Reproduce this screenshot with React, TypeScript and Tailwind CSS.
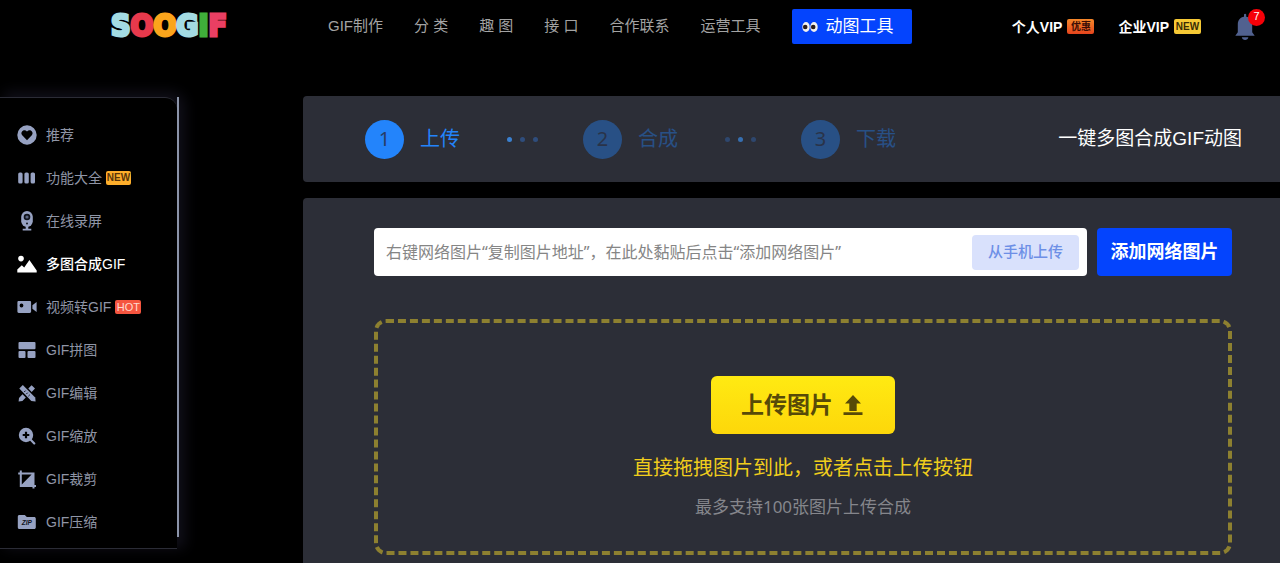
import React from "react";

interface MenuItem {
  label: string;
  icon: React.ReactNode;
  badge?: "NEW" | "HOT";
  active?: boolean;
}

const Icon = ({ children }: { children: React.ReactNode }) => (
  <svg
    className="h-5 w-5 shrink-0"
    viewBox="0 0 20 20"
    fill="currentColor"
    aria-hidden="true"
  >
    {children}
  </svg>
);

const menuItems: MenuItem[] = [
  {
    label: "推荐",
    icon: (
      <Icon>
        <path
          fillRule="evenodd"
          d="M10 .3a9.7 9.7 0 1 1 0 19.4A9.7 9.7 0 0 1 10 .3ZM10 15.2l4.8-4.9c2.6-3-1.7-6.9-4.8-3.9-3.1-3-7.4.9-4.8 3.9L10 15.2Z"
        />
      </Icon>
    ),
  },
  {
    label: "功能大全",
    badge: "NEW",
    icon: (
      <Icon>
        <rect x="1.2" y="4.5" width="4.4" height="11" rx="1.6" />
        <rect x="7.4" y="4.5" width="4.4" height="11" rx="1.6" />
        <rect x="13.6" y="4.5" width="4.4" height="11" rx="1.6" />
      </Icon>
    ),
  },
  {
    label: "在线录屏",
    icon: (
      <Icon>
        <rect x="4.2" y="0" width="11.6" height="16" rx="5.8" />
        <circle cx="10" cy="6" r="3.3" fill="#10131c" />
        <circle cx="10" cy="6" r="1.6" fill="#59637f" />
        <circle cx="10" cy="12.6" r="1" fill="#10131c" />
        <path d="M8.7 15h2.6v2.8h3v1.8H5.7v-1.8h3Z" />
      </Icon>
    ),
  },
  {
    label: "多图合成GIF",
    active: true,
    icon: (
      <Icon>
        <circle cx="4" cy="4.6" r="2.8" />
        <path d="M.3 18.4v-2.8l4.5-4.4 2.4 2.3 5.2-7.6 7.3 10.5v2Z" />
      </Icon>
    ),
  },
  {
    label: "视频转GIF",
    badge: "HOT",
    icon: (
      <Icon>
        <path
          fillRule="evenodd"
          d="M1.8 4h10.9c.9 0 1.4.5 1.4 1.4v9.2c0 .9-.5 1.4-1.4 1.4H1.8C.9 16 .4 15.5.4 14.6V5.4C.4 4.5.9 4 1.8 4Zm2.7 2.6a1.9 1.9 0 1 0 0 3.8 1.9 1.9 0 0 0 0-3.8Z"
        />
        <path d="M15.4 8.3 19.6 5v10l-4.2-3.3Z" />
      </Icon>
    ),
  },
  {
    label: "GIF拼图",
    icon: (
      <Icon>
        <rect x="1.5" y="2" width="17" height="7.2" rx="1" />
        <rect x="1.5" y="11" width="7" height="7" rx="1" />
        <rect x="10.5" y="11" width="8" height="7" rx="1" />
      </Icon>
    ),
  },
  {
    label: "GIF编辑",
    icon: (
      <Icon>
        <path d="m2.3 5.6 3.5-3.5 12.4 12.3.4 4.2-4.3-.5Z" />
        <path d="m14.6 2.2 3.4 3.4-3.3 3.3-3.4-3.4ZM5.5 11.3l3.3 3.3-3.4 3.5-3.8.5.4-3.7Z" />
        <path
          d="m7.2 9 1.4-1.4M9.3 11.1l1.4-1.4M11.4 13.2l1.4-1.4"
          stroke="#10131c"
          strokeWidth="1"
        />
      </Icon>
    ),
  },
  {
    label: "GIF缩放",
    icon: (
      <Icon>
        <path
          fillRule="evenodd"
          d="M9 1.8a7.2 7.2 0 1 1 0 14.4A7.2 7.2 0 0 1 9 1.8ZM7.9 5.7v2.2H5.7v2.2h2.2v2.2h2.2v-2.2h2.2V7.9h-2.2V5.7Z"
        />
        <path
          d="m13.7 13.7 3.6 3.7"
          stroke="currentColor"
          strokeWidth="2.2"
          strokeLinecap="round"
        />
      </Icon>
    ),
  },
  {
    label: "GIF裁剪",
    icon: (
      <Icon>
        <path
          fillRule="evenodd"
          d="M2.8 1.5h2v2h12.7v12.6H19v2h-1.5v1.4h-2v-1.4H2.8V5.5H1.2v-2h1.6ZM4.8 5.5v10l9.8-10Z"
        />
      </Icon>
    ),
  },
  {
    label: "GIF压缩",
    icon: (
      <Icon>
        <path d="M2.5 3h5.3l2 2H17c1.200 0 1.800.6 1.800 1.800v8.400c0 1.200-.6 1.800-1.800 1.800H2.500C1.400 17 .8 16.400.8 15.200V4.800C.8 3.600 1.400 3 2.500 3Z" />
        <text
          x="9.8"
          y="13.4"
          textAnchor="middle"
          fontSize="6.5"
          fontWeight="700"
          fontStyle="italic"
          fill="#10131c"
        >
          ZIP
        </text>
      </Icon>
    ),
  },
];

const navLinks = ["GIF制作", "分 类", "趣 图", "接 口", "合作联系", "运营工具"];

const steps = ["上传", "合成", "下载"];

const logoLetters = [
  { char: "S", color: "text-[#a3dbe3]" },
  { char: "O", color: "text-[#e8394c]" },
  { char: "O", color: "text-[#fba51c]" },
  { char: "G", color: "text-[#a3dbe3]" },
  { char: "I", color: "text-[#3fae3a]" },
  { char: "F", color: "text-[#ea3f63]" },
];

function Header() {
  return (
    <header className="flex h-24 items-start pr-[15px] pl-[111px]">
      <a
        href="#home"
        aria-label="SOOGIF"
        className="mt-2 flex h-9 w-[217px] shrink-0 items-center font-['DejaVu_Sans_Condensed','DejaVu_Sans',sans-serif] text-[30px] leading-9 font-bold"
      >
        {logoLetters.map((letter, i) => (
          <span
            key={i}
            className={`${letter.color} [-webkit-text-stroke:3px_currentColor]`}
          >
            {letter.char}
          </span>
        ))}
      </a>

      <nav className="mt-[9px] flex h-[35px] items-center gap-[31px] text-[15px] whitespace-nowrap text-[#a3a3a3]">
        {navLinks.map((label) => (
          <a key={label} href="#nav">
            {label}
          </a>
        ))}
        <a
          href="#tools"
          className="flex h-[35px] w-[120px] items-center gap-2 rounded-xs bg-[#0444fd] pl-[10px] text-[17px] text-white"
        >
          <svg className="h-3 w-4" viewBox="0 0 16 12" aria-hidden="true">
            <ellipse cx="4" cy="6" rx="3.7" ry="5" fill="#f4f1ee" />
            <ellipse cx="12" cy="6" rx="3.7" ry="5" fill="#f4f1ee" />
            <circle cx="3.2" cy="6" r="2.3" fill="#2b1d1a" />
            <circle cx="11.2" cy="6" r="2.3" fill="#2b1d1a" />
          </svg>
          动图工具
        </a>
      </nav>

      <div className="mt-[9px] ml-auto flex h-[35px] items-center text-sm font-bold whitespace-nowrap text-white">
        <a href="#vip" className="flex items-center gap-[5px]">
          个人VIP
          <span className="flex h-[15px] w-[27px] items-center justify-center rounded-xs bg-linear-to-b from-[#f5872a] to-[#e5431d] text-[10px] leading-none text-[#3b0d05]">
            优惠
          </span>
        </a>
        <a href="#business-vip" className="ml-6 flex items-center gap-[5px]">
          企业VIP
          <span className="flex h-[15px] w-[27px] items-center justify-center rounded-xs bg-[#f6c935] pt-px text-[10px] leading-none text-[#3a2c05]">
            NEW
          </span>
        </a>
        <button type="button" aria-label="7" className="relative ml-[34px] h-7 w-[30px]">
          <svg
            className="h-7 w-5"
            viewBox="0 0 20 28"
            fill="#51618f"
            aria-hidden="true"
          >
            <path d="M9 1.5a1.2 1.2 0 0 1 2.2 0v2.3c3.7.6 6 3.5 6 7.4v8l2.5 3.6H.3l2.5-3.6v-8c0-3.9 2.4-6.800 6.200-7.400Z" />
            <path d="M6.8 24.3h6.6c-.4 1.8-1.6 2.7-3.3 2.7s-2.900-.9-3.300-2.700Z" />
          </svg>
          <span className="absolute -top-1 right-0 flex h-[17px] w-[17px] items-center justify-center rounded-full bg-[#f50008] text-[11px] font-normal">
            7
          </span>
        </button>
      </div>
    </header>
  );
}

function Sidebar() {
  return (
    <aside className="mt-px flex w-[179px] shrink-0 items-start self-start">
      <div className="min-w-0 flex-1 rounded-tr-xl border-y border-[#2b2c36] pt-[15px] pb-[5px] shadow-[6px_-3px_14px_2px_#11101a]">
        <ul>
          {menuItems.map((item) => (
            <li key={item.label}>
              <a
                href="#menu"
                className={`flex h-[43px] items-center pl-[17px] text-sm whitespace-nowrap ${
                  item.active ? "font-medium text-white" : "text-[#8f95a6]"
                }`}
              >
                <span className={item.active ? "text-white" : "text-[#97a2c2]"}>
                  {item.icon}
                </span>
                <span className="ml-[9px]">{item.label}</span>
                {item.badge === "NEW" && (
                  <span className="ml-1 flex h-[14px] w-[25px] items-center justify-center rounded-xs bg-[#fdae2b] pt-px text-[10px] leading-none font-bold text-[#59350a]">
                    NEW
                  </span>
                )}
                {item.badge === "HOT" && (
                  <span className="ml-1 flex h-[14px] w-[26px] items-center justify-center rounded-xs bg-[#f5553f] pt-px text-[11px] leading-none text-[#ffd9cf]">
                    HOT
                  </span>
                )}
              </a>
            </li>
          ))}
        </ul>
      </div>
      <div className="h-[440px] w-[2px] shrink-0 bg-[#8b94a9]" />
    </aside>
  );
}

function Steps() {
  return (
    <section className="flex h-[86px] items-center rounded-l bg-[#2c2e37] pr-[38px] pl-[62px]">
      <ol className="flex items-center text-xl text-[#2384fb]">
        {steps.map((step, i) => (
          <li key={step} className="flex items-center">
            <div className={`flex items-center gap-4 ${i > 0 ? "opacity-40" : ""}`}>
              <span className="flex h-[39px] w-[39px] items-center justify-center rounded-full bg-[#2384fb] font-['Noto_Sans',sans-serif] text-[#273c66]">
                {i + 1}
              </span>
              <span>{step}</span>
            </div>
            {i < steps.length - 1 && (
              <div className="mr-[45px] ml-[47px] flex gap-2" aria-hidden="true">
                {[0, 1, 2].map((dot) => (
                  <span
                    key={dot}
                    className={`h-[5px] w-[5px] rounded-full ${
                      i === dot ? "bg-[#3a80d0]" : "bg-[#2f4d7c]"
                    } ${i > 0 ? "opacity-80" : ""}`}
                  />
                ))}
              </div>
            )}
          </li>
        ))}
      </ol>
      <h1 className="ml-auto text-[19px] whitespace-nowrap text-white">
        一键多图合成GIF动图
      </h1>
    </section>
  );
}

function Uploader() {
  return (
    <section className="mt-4 flex-1 rounded-tl bg-[#2c2e37] pt-[30px] pr-12 pb-2 pl-[71px]">
      <div className="flex gap-[10px]">
        <div className="flex h-12 flex-1 items-center rounded-sm bg-white pr-2 pl-3">
          <input
            type="text"
            aria-label="网络图片地址"
            placeholder="右键网络图片“复制图片地址”，在此处黏贴后点击“添加网络图片”"
            className="min-w-0 flex-1 font-['Noto_Sans','Noto_Sans_CJK_SC',sans-serif] text-base text-gray-700 outline-none placeholder:text-[#858585]"
          />
          <button
            type="button"
            className="h-[35px] w-[107px] rounded-sm bg-[#d9e1fc] text-[15px] font-medium text-[#6d8fe6]"
          >
            从手机上传
          </button>
        </div>
        <button
          type="button"
          className="h-12 w-[135px] rounded-sm bg-[#0444fd] text-lg font-bold text-white"
        >
          添加网络图片
        </button>
      </div>

      <div className="mt-[43px] flex flex-col items-center rounded-xl border-4 border-dashed border-[#8d8030] pt-[53px] pb-8">
        <button
          type="button"
          className="flex h-[58px] w-[184px] items-center justify-center gap-2 rounded-md bg-linear-to-b from-[#ffea12] to-[#fdd70a] text-[23px] font-bold text-[#574a08]"
        >
          上传图片
          <svg
            className="h-6 w-6"
            viewBox="0 0 24 24"
            fill="currentColor"
            aria-hidden="true"
          >
            <path d="m12 2 8 8.500h-4.300V18H8.300v-7.500H4ZM2.500 19.300h19V22h-19Z" />
          </svg>
        </button>
        <p className="mt-5 text-xl text-[#f0cd1c]">
          直接拖拽图片到此，或者点击上传按钮
        </p>
        <p className="mt-[13px] font-['Noto_Sans','Noto_Sans_CJK_SC',sans-serif] text-[17px] leading-6 text-[#85868c]">
          最多支持100张图片上传合成
        </p>
      </div>
    </section>
  );
}

export default function App() {
  return (
    <div className="flex min-h-screen flex-col overflow-x-hidden bg-black font-['Liberation_Sans','Noto_Sans_CJK_SC',sans-serif]">
      <Header />
      <div className="flex flex-1">
        <Sidebar />
        <main className="ml-[124px] flex min-w-0 flex-1 flex-col">
          <Steps />
          <Uploader />
        </main>
      </div>
    </div>
  );
}
